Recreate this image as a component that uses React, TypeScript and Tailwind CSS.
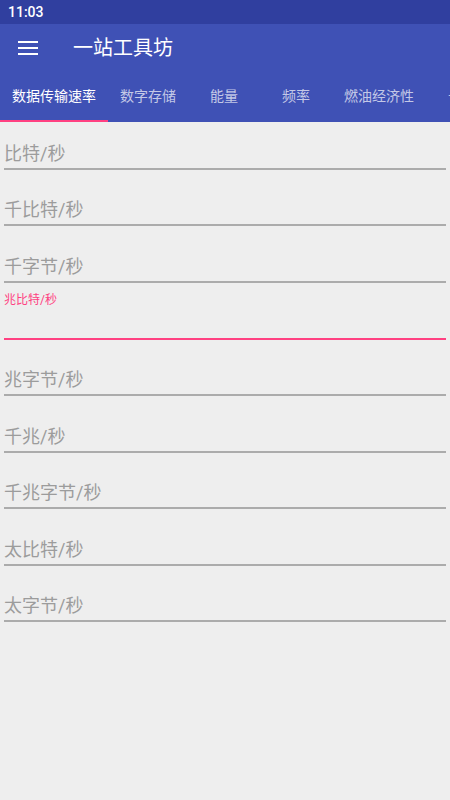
import React from "react";

const tabs = [
  { label: "数据传输速率", w: "w-[108px]" },
  { label: "数字存储", w: "w-[80px]" },
  { label: "能量", w: "w-[72px]" },
  { label: "频率", w: "w-[72px]" },
  { label: "燃油经济性", w: "w-[94px]" },
  { label: "长度", w: "w-[72px]" },
];

// spacing between fields alternates 8/9px like the device render
const units = [
  { label: "比特/秒", mt: "mt-0" },
  { label: "千比特/秒", mt: "mt-[8px]" },
  { label: "千字节/秒", mt: "mt-[9px]" },
  { label: "兆比特/秒", mt: "mt-[9px]" },
  { label: "兆字节/秒", mt: "mt-[8px]" },
  { label: "千兆/秒", mt: "mt-[9px]" },
  { label: "千兆字节/秒", mt: "mt-[8px]" },
  { label: "太比特/秒", mt: "mt-[9px]" },
  { label: "太字节/秒", mt: "mt-[8px]" },
];

const font = "font-['Roboto','Noto_Sans_CJK_SC',sans-serif]";

const Field = ({ label, focused, mt }: { label: string; focused: boolean; mt: string }) => {
  if (focused) {
    return (
      <div className={`h-[48px] flex flex-col ${mt}`}>
        <div className="text-[12px] leading-[14px] text-[#ff4081] pt-[1px]">{label}</div>
        <div className="flex-1" />
        <div className="h-[2px] bg-[#ff4081]" />
      </div>
    );
  }
  return (
    <div className={`h-[48px] flex flex-col ${mt}`}>
      <div className="flex-1" />
      <div className="text-[18px] leading-[20px] text-[#9c9c9c] mb-[4px]">{label}</div>
      <div className="h-[2px] bg-[#ababab]" />
    </div>
  );
};

export default function App() {
  return (
    <div className={`w-[450px] h-[800px] bg-[#eeeeee] overflow-hidden ${font}`}>
      <div className="h-[24px] bg-[#303f9f] flex items-center px-[8px]">
        <span className="text-white text-[14px] font-medium">11:03</span>
      </div>
      <div className="h-[48px] bg-[#3f51b5] flex items-center">
        <div className="w-[73px] pl-[18px]">
          <svg width="20" height="14" viewBox="0 0 20 14">
            <rect x="0" y="0" width="20" height="2" fill="white" />
            <rect x="0" y="6" width="20" height="2" fill="white" />
            <rect x="0" y="12" width="20" height="2" fill="white" />
          </svg>
        </div>
        <span className="text-white text-[20px]">一站工具坊</span>
      </div>
      <div className="h-[50px] bg-[#3f51b5] flex overflow-hidden">
        {tabs.map((t, i) => (
          <div key={t.label} className={`${t.w} shrink-0 flex flex-col`}>
            <div
              className={`flex-1 flex items-center justify-center whitespace-nowrap text-[14px] ${
                i === 0 ? "text-white" : "text-white/70"
              }`}
            >
              {t.label}
            </div>
            <div className={`h-[2px] ${i === 0 ? "bg-[#ff4081]" : ""}`} />
          </div>
        ))}
      </div>
      <div className="flex flex-col px-[4px]">
        {units.map((u, i) => (
          <Field key={u.label} label={u.label} mt={u.mt} focused={i === 3} />
        ))}
      </div>
    </div>
  );
}
